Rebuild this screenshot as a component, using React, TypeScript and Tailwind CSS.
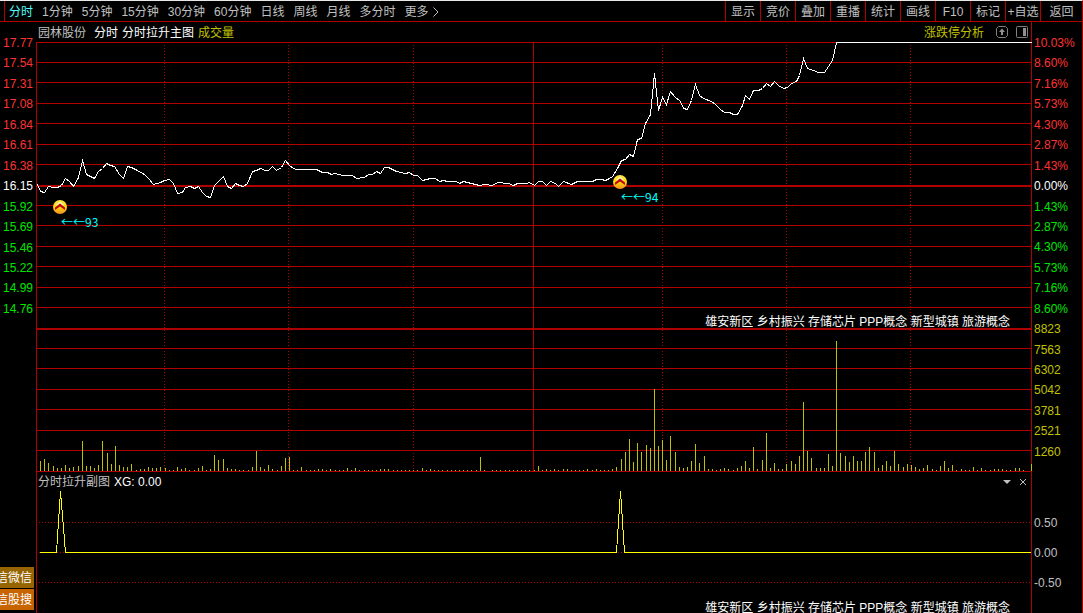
import { useState } from "react";

const PERIODS = ["分时", "1分钟", "5分钟", "15分钟", "30分钟", "60分钟", "日线", "周线", "月线", "多分时"];
const TOOLS = ["显示", "竞价", "叠加", "重播", "统计", "画线", "F10", "标记", "+自选"];

const PRICES_UP = ["17.77", "17.54", "17.31", "17.08", "16.84", "16.61", "16.38"];
const PRICES_DOWN = ["15.92", "15.69", "15.46", "15.22", "14.99", "14.76"];
const PERCENT_UP = ["10.03%", "8.60%", "7.16%", "5.73%", "4.30%", "2.87%", "1.43%"];
const PERCENT_DOWN = ["1.43%", "2.87%", "4.30%", "5.73%", "7.16%", "8.60%"];
const VOLUMES = ["8823", "7563", "6302", "5042", "3781", "2521", "1260"];
const CONCEPTS = "雄安新区 乡村振兴 存储芯片 PPP概念 新型城镇 旅游概念";

// Plot area, in chart units
const LEFT = 37;
const WIDTH = 994;
const VOLUME_BASE = 471;

const GRID_ROWS = [62, 82, 103, 123, 144, 164, 205, 225, 246, 266, 287, 307, 348, 368, 389, 409, 430, 450, 471];
const GRID_COLS = [164, 288, 413, 662, 786, 910];

const PRICE_LINE =
  "37,184 40,191 44,192 48,186 53,187 57,187 61,185 65,178 69,181 73,186 78,177 82,160 86,174 90,176 94,178 98,171 " +
  "102,168 106,163 110,165 114,166 119,174 123,178 127,166 131,167 135,169 144,174 148,178 153,184 160,182 164,180 " +
  "169,179 173,183 177,193 182,192 185,187 190,186 194,188 198,186 202,192 206,196 210,197 214,185 223,176 227,186 " +
  "231,188 235,183 239,185 243,186 247,183 252,171 256,170 260,168 265,170 268,170 272,166 276,170 281,167 285,160 " +
  "289,165 293,168 296,169 316,169 322,172 327,172 331,174 334,173 343,175 352,175 356,178 364,177 368,174 372,174 " +
  "376,171 380,173 384,167 388,167 396,171 405,173 409,172 413,175 417,175 422,180 430,178 435,178 439,181 443,180 " +
  "447,181 456,181 459,183 463,181 471,183 479,185 484,184 492,185 497,182 508,183 513,185 517,183 526,183 529,182 " +
  "534,185 538,181 542,181 546,185 550,181 555,183 558,186 563,181 571,184 577,181 592,181 596,179 601,179 605,180 " +
  "609,178 612,176 617,168 621,160 625,159 629,154 633,156 637,139 641,138 645,123 650,114 654,73 658,110 662,97 " +
  "666,104 670,91 674,96 680,101 683,108 687,109 691,100 695,84 699,95 703,98 711,101 715,104 720,109 724,112 " +
  "729,112 733,114 737,114 742,105 745,95 749,99 753,90 758,90 762,88 766,83 770,86 774,81 778,85 783,88 787,87 " +
  "791,83 796,81 799,75 803,58 807,68 813,70 818,72 824,72 828,66 832,60 836,42 1031,42";

// One bar for each trading minute
const BARS = [
  10, 12, 8, 5, 3, 3, 6, 3, 4, 5, 30, 5, 5, 3, 6, 30, 18, 7, 25, 6, 4, 4, 7, 1, 2, 2, 4, 3, 3, 4,
  3, 1, 1, 4, 2, 3, 1, 1, 3, 5, 1, 2, 16, 11, 12, 3, 2, 2, 1, 1, 1, 4, 20, 4, 2, 6, 2, 1, 5, 13,
  14, 1, 1, 4, 1, 1, 1, 2, 2, 1, 2, 1, 1, 1, 3, 1, 3, 1, 1, 1, 1, 1, 2, 2, 2, 1, 1, 1, 1, 1,
  1, 1, 3, 1, 2, 1, 1, 1, 1, 1, 1, 1, 1, 1, 1, 1, 14, 1, 0, 1, 1, 1, 1, 1, 1, 1, 1, 1, 1, 1,
  5, 1, 2, 1, 2, 1, 2, 2, 1, 1, 1, 1, 2, 1, 2, 1, 1, 1, 2, 4, 12, 19, 32, 9, 28, 19, 26, 23, 82, 25,
  31, 11, 35, 19, 4, 3, 4, 10, 27, 8, 15, 2, 2, 1, 2, 3, 2, 1, 3, 5, 10, 3, 24, 2, 11, 38, 3, 8, 2, 2,
  7, 10, 7, 15, 69, 20, 13, 3, 3, 3, 17, 5, 130, 18, 15, 9, 15, 10, 10, 19, 24, 19, 3, 6, 10, 5, 20, 7, 4, 7,
  6, 4, 2, 3, 6, 2, 1, 5, 10, 3, 6, 1, 2, 1, 1, 4, 1, 3, 1, 1, 2, 2, 2, 1, 1, 3, 3, 1, 0, 7,
];

const barX = (i: number) => Math.round(40.2 + i * 4.146);

const AxisLabels = ({ items, className }: { items: string[]; className: string }) => (
  <>
    {items.map((item, i) => (
      <span key={i} className={className}>{item}</span>
    ))}
  </>
);

const Marker = ({ x, top, value }: { x: number; top: string; value: number }) => (
  <div
    className={`absolute -ml-[7px] ${top}`}
    style={{ left: `${((x - LEFT) / WIDTH) * 100}%` }}
  >
    <svg className="block" width="14" height="14" viewBox="0 0 14 14" aria-hidden="true">
      <defs>
        <linearGradient id={`coin-${value}`} x1="0" y1="0" x2="0" y2="1">
          <stop offset="0" stopColor="#f8e848" />
          <stop offset="0.5" stopColor="#ffd800" />
          <stop offset="1" stopColor="#f08c28" />
        </linearGradient>
      </defs>
      <circle cx="7" cy="7" r="7" fill={`url(#coin-${value})`} />
      <path d="M3.5 5.5 L7 2.5 L10.5 5.5" fill="none" stroke="#fff6c8" strokeWidth="1.5" />
      <path d="M2 7.5 L7 3.5 L12 7.5 V10 L7 6.5 L2 10 Z" fill="#c00810" />
    </svg>
    <div className="pl-2 font-['Noto_Sans_CJK_SC',sans-serif] leading-4 text-[#00ffff]">←←{value}</div>
  </div>
);

const MainChart = () => (
  <div className="relative">
    <svg
      className="relative block h-[430px] w-full overflow-visible"
      viewBox="37 42 994 430"
      preserveAspectRatio="none"
      shapeRendering="crispEdges"
      role="img"
      aria-label="分时走势与成交量"
    >
      <g fill="#b00000">
        <rect x="37" y="42" width="994" height="1" />
        {GRID_ROWS.map((y) => (
          <rect key={y} x="37" y={y} width="994" height="1" />
        ))}
        <rect x="37" y="185" width="994" height="2" />
        <rect x="37" y="328" width="994" height="2" />
        <rect x="533" y="42" width="1" height="430" />
      </g>
      <g stroke="#b00000" strokeDasharray="1 2">
        {GRID_COLS.map((x) => (
          <line key={x} x1={x + 0.5} x2={x + 0.5} y1="45" y2="471" />
        ))}
      </g>
      <g fill="#c0c000">
        {BARS.map((h, i) => (
          <rect key={i} x={barX(i)} y={VOLUME_BASE - h} width="1" height={h} />
        ))}
      </g>
      <polyline points={PRICE_LINE} transform="translate(0.5 0.5)" fill="none" stroke="#ffffff" />
    </svg>
    <Marker x={60} top="top-[158px]" value={93} />
    <Marker x={620} top="top-[133px]" value={94} />
    <p className="absolute top-[272px] right-[21px] text-white">{CONCEPTS}</p>
  </div>
);

const SubChart = () => (
  <div className="relative overflow-hidden">
    <div className="flex h-[19px] items-center gap-1 pr-1 pl-px">
      <h2 className="text-[#c0c0c0]">分时拉升副图</h2>
      <span className="flex-1 text-white">XG: 0.00</span>
      <button type="button" aria-label="副图菜单" className="mr-1">
        <svg className="block" width="8" height="8" viewBox="0 0 8 8">
          <path d="M0 2 H8 L4 6 Z" fill="#c0c0c0" />
        </svg>
      </button>
      <button type="button" aria-label="关闭副图">
        <svg className="block" width="8" height="8" viewBox="0 0 8 8">
          <path d="M1 1 L7 7 M7 1 L1 7" stroke="#c0c0c0" />
        </svg>
      </button>
    </div>
    <svg
      className="block h-[122px] w-full"
      viewBox="37 491 994 122"
      preserveAspectRatio="none"
      shapeRendering="crispEdges"
      role="img"
      aria-label="分时拉升信号"
    >
      <g stroke="#b00000" strokeDasharray="1 2">
        <line x1="39" x2="1031" y1="522.5" y2="522.5" />
        <line x1="39" x2="1031" y1="552.5" y2="552.5" />
        <line x1="39" x2="1031" y1="582.5" y2="582.5" />
      </g>
      <polyline
        points="39,552 56,552 60,491 65,552 616,552 620,491 624,552 1031,552"
        transform="translate(0.5 0.5)"
        fill="none"
        stroke="#ffff00"
      />
    </svg>
    <p className="absolute right-[21px] -bottom-[3px] text-white">{CONCEPTS}</p>
  </div>
);

const App = () => {
  const [period, setPeriod] = useState("分时");

  return (
    <div className="flex min-h-screen flex-col overflow-hidden border-t border-r border-t-[#e8e8e8] border-r-[#b00000] bg-black font-['Liberation_Sans','Noto_Sans_CJK_SC',sans-serif] text-[12px] leading-4 whitespace-nowrap">
      {/* Toolbar */}
      <header className="flex h-[21px] justify-between border-b border-[#b00000] pl-1 text-[#c0c0c0]">
        <nav className="flex items-center gap-[9px] border-l border-[#b00000] pt-0.5 pl-1" aria-label="周期">
          {PERIODS.map((item) => (
            <button
              key={item}
              type="button"
              onClick={() => setPeriod(item)}
              className={item === period ? "text-[#54fcfc]" : "hover:text-white"}
            >
              {item}
            </button>
          ))}
          <button type="button" className="flex items-center gap-1 hover:text-white">
            更多
            <svg width="6" height="10" viewBox="0 0 6 10" aria-hidden="true">
              <path d="M0.5 0.5 L5 5 L0.5 9.5" fill="none" stroke="#c0c0c0" />
            </svg>
          </button>
        </nav>
        <div className="flex">
          {TOOLS.map((item) => (
            <button key={item} type="button" className="w-[35px] border-l border-[#b00000] pt-0.5 hover:text-white">
              {item}
            </button>
          ))}
          <button type="button" className="w-[42px] border-l border-[#b00000] pt-0.5 hover:text-white">返回</button>
        </div>
      </header>

      <main className="flex flex-1">
        {/* Price axis */}
        <aside className="flex w-9 flex-col pt-[13px]">
          <div className="flex h-[282px] flex-col justify-between pr-[3px] text-right">
            <AxisLabels items={PRICES_UP} className="text-[#ff3232]" />
            <span className="text-white">16.15</span>
            <AxisLabels items={PRICES_DOWN} className="text-[#00e600]" />
          </div>
          <div className="mt-auto flex w-[34px] flex-col gap-px pb-[3px] text-white">
            <button type="button" className="flex h-[21px] items-center justify-end overflow-hidden bg-[#966400] pr-0.5">
              信微信
            </button>
            <button type="button" className="flex h-[21px] items-center justify-end overflow-hidden bg-[#c86400] pr-0.5">
              信股搜
            </button>
          </div>
        </aside>

        {/* Charts */}
        <section className="flex min-w-0 flex-1 flex-col">
          <div className="flex h-5 items-center gap-1 pt-0.5 pr-[3px] pl-0.5">
            <h1 className="mr-1 text-[#c0c0c0]">园林股份</h1>
            <span className="text-white">分时</span>
            <span className="text-white">分时拉升主图</span>
            <span className="text-[#c0c000]">成交量</span>
            <a href="#analysis" className="mr-2 ml-auto text-[#c0c000]">涨跌停分析</a>
            <button type="button" aria-label="上移" className="mr-1 pb-0.5">
              <svg className="block" width="12" height="12" viewBox="0 0 12 12">
                <path d="M2.5 0.5 H9.5 L11.5 2.5 V9.5 L9.5 11.5 H2.5 L0.5 9.5 V2.5 Z" fill="none" stroke="#808080" />
                <path d="M6 2.5 L9 6 H7 V9 H5 V6 H3 Z" fill="#909090" />
              </svg>
            </button>
            <button type="button" aria-label="侧栏" className="pb-0.5">
              <svg className="block" width="12" height="12" viewBox="0 0 12 12">
                <rect x="0.5" y="0.5" width="11" height="11" rx="1" fill="none" stroke="#808080" />
                <rect x="7" y="2" width="3" height="8" fill="#909090" />
              </svg>
            </button>
          </div>
          <div className="flex-1 border-l border-[#b00000]">
            <MainChart />
            <SubChart />
          </div>
        </section>

        {/* Percent and volume axis */}
        <aside className="w-[51px] border-l border-[#b00000] pt-[13px] pl-0.5">
          <div className="flex h-[425px] flex-col justify-between">
            <AxisLabels items={PERCENT_UP} className="text-[#ff3232]" />
            <span className="text-white">0.00%</span>
            <AxisLabels items={PERCENT_DOWN} className="text-[#00e600]" />
            <AxisLabels items={VOLUMES} className="text-[#c0c000]" />
          </div>
          <div className="mt-[55px] flex flex-col gap-[14px] text-[#c0c0c0]">
            <span>0.50</span>
            <span>0.00</span>
            <span>-0.50</span>
          </div>
        </aside>
      </main>
    </div>
  );
};

export default App;
